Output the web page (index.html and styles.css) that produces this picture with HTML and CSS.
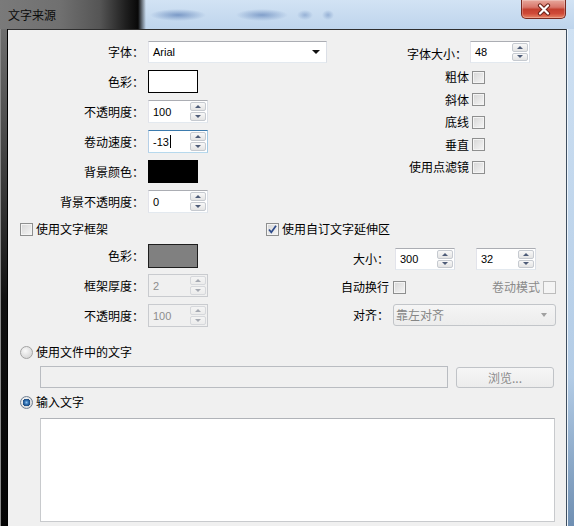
FILE: index.html
```html
<!DOCTYPE html>
<html lang="zh-CN">
<head>
<meta charset="utf-8">
<title>文字来源</title>
<link rel="stylesheet" href="styles.css">
</head>
<body>
<div class="window">
  <header class="titlebar">
    <span class="title">文字来源</span>
    <span class="close"><svg width="18" height="13" viewBox="0 0 18 13"><path d="M5 2.5 L13 10.5 M13 2.5 L5 10.5" stroke="#6a2219" stroke-width="4.2" stroke-linecap="round"/><path d="M5 2.5 L13 10.5 M13 2.5 L5 10.5" stroke="#fff" stroke-width="2.2" stroke-linecap="round"/></svg></span>
  </header>
  <div class="frame">
    <div class="edge-left"></div>
    <main class="client">
      <section class="top">
        <div class="form-left">
          <span class="lbl">字体：</span>
          <div class="combo combo-font"><span class="val">Arial</span><i class="drop"></i></div>
          <span class="lbl">色彩：</span>
          <div class="swatch swatch-white"></div>
          <span class="lbl">不透明度：</span>
          <div class="spin"><span class="val">100</span><span class="arrows"><i class="up"></i><i class="dn"></i></span></div>
          <span class="lbl">卷动速度：</span>
          <div class="spin focus"><span class="val">-13<b class="caret"></b></span><span class="arrows"><i class="up"></i><i class="dn"></i></span></div>
          <span class="lbl">背景颜色：</span>
          <div class="swatch swatch-black"></div>
          <span class="lbl">背景不透明度：</span>
          <div class="spin"><span class="val">0</span><span class="arrows"><i class="up"></i><i class="dn"></i></span></div>
        </div>
        <div class="form-right">
          <span class="lbl">字体大小：</span>
          <div class="spin spin-size"><span class="val">48</span><span class="arrows"><i class="up"></i><i class="dn"></i></span></div>
          <span class="lbl">粗体</span><span class="cb"></span>
          <span class="lbl">斜体</span><span class="cb"></span>
          <span class="lbl">底线</span><span class="cb"></span>
          <span class="lbl">垂直</span><span class="cb"></span>
          <span class="lbl">使用点滤镜</span><span class="cb"></span>
        </div>
      </section>

      <section class="mid">
        <div class="group group-frame">
          <div class="check-head"><span class="cb"></span><span>使用文字框架</span></div>
          <div class="form-frame">
            <span class="lbl">色彩：</span>
            <div class="swatch swatch-gray"></div>
            <span class="lbl">框架厚度：</span>
            <div class="spin disabled"><span class="val">2</span><span class="arrows"><i class="up"></i><i class="dn"></i></span></div>
            <span class="lbl">不透明度：</span>
            <div class="spin disabled"><span class="val">100</span><span class="arrows"><i class="up"></i><i class="dn"></i></span></div>
          </div>
        </div>
        <div class="group group-extent">
          <div class="check-head"><span class="cb on"><svg width="11" height="11" viewBox="0 0 11 11"><path d="M2 5.5 L4.3 8.3 L9 1.8" fill="none" stroke="#2d4a8a" stroke-width="1.7"/></svg></span><span>使用自订文字延伸区</span></div>
          <div class="form-extent">
            <span class="lbl">大小：</span>
            <div class="pair">
              <div class="spin"><span class="val">300</span><span class="arrows"><i class="up"></i><i class="dn"></i></span></div>
              <div class="spin"><span class="val">32</span><span class="arrows"><i class="up"></i><i class="dn"></i></span></div>
            </div>
            <span class="lbl">自动换行</span>
            <div class="wrap-row">
              <span class="cb"></span>
              <span class="scroll-mode"><span class="dim">卷动模式</span><span class="cb disabled"></span></span>
            </div>
            <span class="lbl">对齐：</span>
            <div class="combo disabled"><span class="val">靠左对齐</span><i class="drop"></i></div>
          </div>
        </div>
      </section>

      <section class="source">
        <div class="radio-row"><span class="radio"></span><span>使用文件中的文字</span></div>
        <div class="file-row">
          <div class="file-field"></div>
          <button class="btn" disabled>浏览...</button>
        </div>
        <div class="radio-row radio-row-2"><span class="radio on"></span><span>输入文字</span></div>
        <div class="text-input"></div>
      </section>
    </main>
    <div class="edge-right"></div>
  </div>
</div>
</body>
</html>
```

FILE: styles.css
```css
* { box-sizing: border-box; margin: 0; padding: 0; }

html, body {
  width: 574px;
  height: 526px;
  overflow: hidden;
}

body {
  font-family: "Noto Sans CJK SC", "Liberation Sans", sans-serif;
  font-size: 12px;
  line-height: 16px;
  color: #000;
  background: #c4d8ee;
}

.window {
  display: grid;
  grid-template-rows: 29px 497px;
  height: 526px;
}

/* ---------- title bar ---------- */
.titlebar {
  display: flex;
  justify-content: space-between;
  align-items: flex-start;
  background:
    linear-gradient(90deg, #7a7a7a 0, #707070 60px, #555 100px, #1e1e1e 126px, #080808 138px, rgba(8,8,8,0) 146px),
    radial-gradient(28px 6px at 178px 15px, rgba(60,100,165,.55), rgba(60,100,165,0)),
    radial-gradient(26px 6px at 262px 15px, rgba(60,100,165,.5), rgba(60,100,165,0)),
    radial-gradient(8px 5px at 305px 15px, rgba(60,100,165,.35), rgba(60,100,165,0)),
    radial-gradient(6px 5px at 328px 15px, rgba(60,100,165,.35), rgba(60,100,165,0)),
    linear-gradient(180deg, #d2e3f4 0, #bed4ec 100%);
}

.title {
  padding: 7px 0 0 8px;
  font-size: 12px;
  line-height: 16px;
  color: #0c0c0c;
}

.close {
  display: flex;
  align-items: center;
  justify-content: center;
  width: 45px;
  height: 19px;
  margin-right: 8px;
  border: 1px solid #7a2a20;
  border-top: none;
  border-radius: 0 0 5px 5px;
  background: linear-gradient(180deg, #e8a89c 0, #d8766a 40%, #c4402f 52%, #cf4a38 75%, #e88566 100%);
  box-shadow: inset 0 0 0 1px rgba(255,255,255,.25);
}

/* ---------- frame ---------- */
.frame {
  display: grid;
  grid-template-columns: 8px 558px 8px;
}

.edge-left {
  background: linear-gradient(180deg, #6e6e6e 0, #3c3c3c 30%, #111 55%, #050505 100%);
  box-shadow: inset -1px 0 #000, inset 1px 0 #8a8a8a;
}

.edge-right {
  background: linear-gradient(180deg, #cfe1f3 0, #b3cce6 70%, #6f8fb2 100%);
  box-shadow: inset 1px 0 #3f4f60, inset 2px 0 #eef5fc;
}

.client {
  background: #f0f0f0;
  border-top: 1px solid #2e2e2e;
  display: flex;
  flex-direction: column;
}

/* ---------- shared controls ---------- */
.lbl {
  justify-self: end;
  white-space: nowrap;
}

.val {
  font-family: "Liberation Sans", sans-serif;
  font-size: 11px;
}

.spin {
  width: 60px;
  height: 23px;
  display: flex;
  align-items: center;
  justify-content: space-between;
  padding: 1px 1px 1px 4px;
  background: #fff;
  border: 1px solid;
  border-color: #abadb3 #dbdfe6 #e3e9ef #e2e3ea;
}

.spin.focus {
  border-color: #3d7bad #a4c9e3 #b7d9ed #b5cfe7;
}

.spin .val {
  display: flex;
  align-items: center;
}

.caret {
  display: inline-block;
  width: 1px;
  height: 13px;
  background: #000;
  margin-left: 1px;
}

.arrows {
  display: grid;
  grid-template-rows: 1fr 1fr;
  row-gap: 1px;
  width: 16px;
  height: 100%;
}

.arrows i {
  display: flex;
  align-items: center;
  justify-content: center;
  border: 1px solid #c6cad0;
  border-radius: 2px;
  background: linear-gradient(180deg, #f8f8f8, #e4e4e4);
}

.arrows i::before {
  content: "";
  border-left: 3px solid transparent;
  border-right: 3px solid transparent;
}

.arrows .up::before { border-bottom: 3px solid #4e5c78; }
.arrows .dn::before { border-top: 3px solid #4e5c78; }

.spin.disabled {
  background: #f0f0f0;
  border-color: #c9cbcf;
  color: #8d8d8d;
}

.spin.disabled .arrows i {
  border-color: #d6d8dc;
  background: linear-gradient(180deg, #f4f4f4, #ececec);
}

.spin.disabled .arrows .up::before { border-bottom-color: #a5a9b2; }
.spin.disabled .arrows .dn::before { border-top-color: #a5a9b2; }

.swatch {
  width: 50px;
  height: 23px;
}

.swatch-white { background: #fff; border: 1px solid #000; }
.swatch-black { background: #000; }
.swatch-gray { background: #808080; border: 1px solid #1e1e1e; height: 24px; }

.combo {
  height: 22px;
  display: flex;
  align-items: center;
  justify-content: space-between;
  padding: 0 6px 0 4px;
  background: #fff;
  border: 1px solid;
  border-color: #abadb3 #dbdfe6 #e3e9ef #e2e3ea;
}

.combo-font { width: 179px; }

.drop {
  border-left: 4px solid transparent;
  border-right: 4px solid transparent;
  border-top: 4px solid #111;
}

.combo.disabled {
  width: 163px;
  border: 1px solid #c2c5c9;
  border-radius: 3px;
  background: linear-gradient(180deg, #f5f5f5, #ececec);
  color: #868686;
  padding: 0 8px 0 2px;
}

.combo.disabled .val {
  font-family: "Noto Sans CJK SC", sans-serif;
  font-size: 12px;
}

.combo.disabled .drop {
  border-top-color: #a0a0a0;
  border-left-width: 3.5px;
  border-right-width: 3.5px;
}

.cb {
  width: 13px;
  height: 13px;
  display: flex;
  align-items: center;
  justify-content: center;
  border: 1px solid #8e8f8f;
  background: linear-gradient(135deg, #d6d6d6, #f6f6f6);
  box-shadow: inset 0 0 0 1px #f4f4f4;
}

.cb.disabled {
  border-color: #bcbcbc;
  background: #f4f4f4;
}

.dim { color: #8a8a8a; }

.radio {
  width: 13px;
  height: 13px;
  border-radius: 50%;
  border: 1px solid #a3a3a3;
  background: radial-gradient(circle at 40% 35%, #fafafa 0, #e0e0e0 55%, #cfcfcf 100%);
}

.radio.on {
  border-color: #6f7f92;
  background:
    radial-gradient(circle at 50% 50%, #8cc1f0 0, #2f6fb0 2px, #1b4a80 3.6px, rgba(0,0,0,0) 4px),
    radial-gradient(circle at 40% 35%, #fafafa 0, #e0e0e0 55%, #cfcfcf 100%);
}

/* ---------- top section ---------- */
.top {
  display: flex;
  padding-top: 10px;
}

.form-left {
  display: grid;
  grid-template-columns: 136px auto;
  grid-auto-rows: 23px;
  column-gap: 4px;
  row-gap: 7px;
  align-items: center;
  justify-items: start;
}

.form-left .lbl { justify-self: end; }

.form-right {
  margin-left: auto;
  margin-right: 36px;
  margin-top: 1px;
  display: grid;
  grid-template-columns: auto 60px;
  grid-template-rows: 25px repeat(5, 22.5px);
  column-gap: 3px;
  align-items: center;
  justify-items: start;
}

.form-right .lbl { justify-self: end; }
.form-right .spin-size { align-self: start; height: 22px; }
.form-right .cb { margin-left: 2px; }
.form-right .lbl:not(:first-child) { margin-right: -2px; }

/* ---------- middle section ---------- */
.mid {
  display: flex;
  padding: 8px 10px 0 12px;
}

.group-frame { width: 248px; }
.group-extent { flex: 1; }

.check-head {
  display: flex;
  align-items: center;
  gap: 3px;
  height: 16px;
}

.form-frame {
  margin-top: 7px;
  display: grid;
  grid-template-columns: 124px auto;
  grid-auto-rows: 23px;
  column-gap: 4px;
  row-gap: 7px;
  align-items: center;
  justify-items: start;
}

.form-extent {
  margin-top: 11px;
  display: grid;
  grid-template-columns: 123px 1fr;
  grid-template-rows: 22px 34px 22px;
  column-gap: 4px;
  align-items: center;
}

.form-extent .spin { height: 22px; }

.pair {
  display: flex;
  gap: 21px;
  padding-left: 2px;
}

.wrap-row {
  display: flex;
  align-items: center;
  justify-content: space-between;
}

.scroll-mode {
  display: flex;
  align-items: center;
  gap: 3px;
}

/* ---------- source section ---------- */
.source {
  display: flex;
  flex-direction: column;
  padding: 17px 0 0 12px;
}

.radio-row {
  display: flex;
  align-items: center;
  gap: 3px;
  height: 16px;
}

.file-row {
  display: flex;
  gap: 8px;
  margin: 6px 0 0 20px;
}

.file-field {
  width: 408px;
  height: 22px;
  border: 1px solid #b9bcc1;
  background: #f0f0f0;
}

.btn {
  width: 98px;
  height: 21px;
  margin-top: 1px;
  border: 1px solid #c0c3c7;
  border-radius: 3px;
  background: linear-gradient(180deg, #f6f6f6, #ececec);
  color: #8b8b8b;
  font-family: "Noto Sans CJK SC", sans-serif;
  font-size: 12px;
  line-height: 16px;
}

.radio-row-2 { margin-top: 6px; }

.text-input {
  margin: 8px 0 0 20px;
  width: 515px;
  height: 104px;
  background: #fff;
  border: 1px solid #c8cacd;
  border-top-color: #b0b3b8;
}
```
